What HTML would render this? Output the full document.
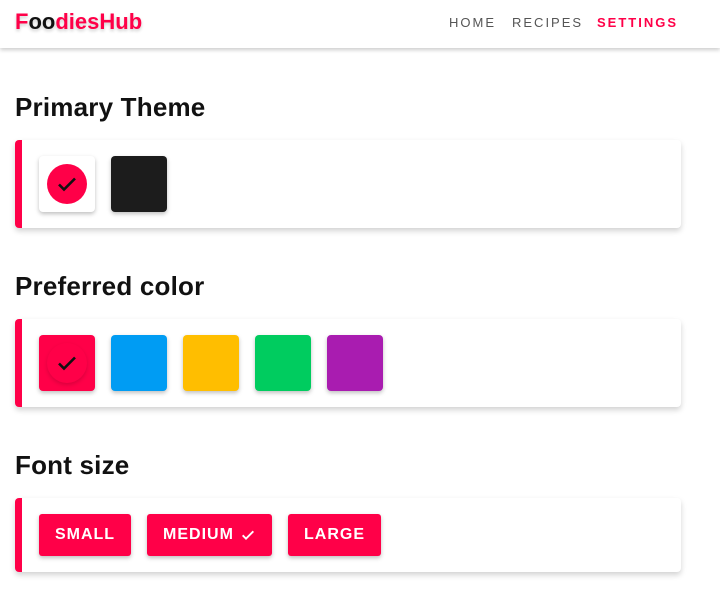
<!DOCTYPE html>
<html><head><style>
*{margin:0;padding:0;box-sizing:border-box}
body{width:720px;height:607px;background:#fff;font-family:"Liberation Sans",Arial,sans-serif;position:relative;overflow:hidden}
.hdr{position:absolute;left:0;top:0;width:720px;height:48px;background:#fff;box-shadow:0 2px 4px rgba(0,0,0,.2)}
.logo{position:absolute;left:15px;top:9px;font-size:22px;font-weight:bold;color:#ff0048;letter-spacing:0;text-shadow:0 2px 3px rgba(0,0,0,.2)}
.logo b{color:#111}
.nav{position:absolute;top:15px;font-size:13px;letter-spacing:2px;color:#555}
h2{position:absolute;left:15px;font-size:26px;font-weight:bold;color:#111;letter-spacing:0.2px}
.card{position:absolute;left:15px;width:666px;background:#fff;border-left:7px solid #ff0048;border-radius:4px;box-shadow:0 3px 6px rgba(0,0,0,.18)}
.sw{position:absolute;width:56px;height:56px;border-radius:4px;box-shadow:0 2px 4px rgba(0,0,0,.25)}
.btn{position:absolute;top:514px;height:42px;background:#ff0048;color:#fff;font-weight:bold;font-size:16px;letter-spacing:1px;border-radius:3px;box-shadow:0 2px 4px rgba(0,0,0,.25);display:flex;align-items:center;justify-content:center}
</style></head><body>
<div class="hdr">
<div class="logo">F<b>oo</b>diesHub</div>
<div class="nav" style="left:449px">HOME</div>
<div class="nav" style="left:512px">RECIPES</div>
<div class="nav" style="left:597px;color:#ff0048;font-weight:bold">SETTINGS</div>
</div>
<h2 style="top:92px">Primary Theme</h2>
<div class="card" style="top:140px;height:88px"></div>
<div class="sw" style="left:39px;top:156px;background:#fff"></div>
<div style="position:absolute;left:47px;top:164px;width:40px;height:40px;border-radius:50%;background:#ff0048"></div>
<svg style="position:absolute;left:55px;top:172px" width="24" height="24" viewBox="0 0 24 24"><path d="M4 12.5l5 5L20 6.5" fill="none" stroke="#111" stroke-width="2.6"/></svg>
<div class="sw" style="left:111px;top:156px;background:#1c1c1c"></div>

<h2 style="top:271px">Preferred color</h2>
<div class="card" style="top:319px;height:88px"></div>
<div class="sw" style="left:39px;top:335px;background:#ff0048"></div>
<div style="position:absolute;left:47px;top:343px;width:40px;height:40px;border-radius:50%;background:#ff0048;box-shadow:0 2px 4px rgba(0,0,0,.15)"></div>
<svg style="position:absolute;left:55px;top:351px" width="24" height="24" viewBox="0 0 24 24"><path d="M4 12.5l5 5L20 6.5" fill="none" stroke="#111" stroke-width="2.6"/></svg>
<div class="sw" style="left:111px;top:335px;background:#009cf3"></div>
<div class="sw" style="left:183px;top:335px;background:#ffbe00"></div>
<div class="sw" style="left:255px;top:335px;background:#00cc5f"></div>
<div class="sw" style="left:327px;top:335px;background:#a91cb0"></div>

<h2 style="top:450px">Font size</h2>
<div class="card" style="top:498px;height:74px"></div>
<div class="btn" style="left:39px;width:92px">SMALL</div>
<div class="btn" style="left:147px;width:125px">MEDIUM<svg style="margin-left:6px" width="16" height="16" viewBox="0 0 24 24"><path d="M4 12.5l5 5L20 6.5" fill="none" stroke="#fff" stroke-width="2.8"/></svg></div>
<div class="btn" style="left:288px;width:93px">LARGE</div>
</body></html>
